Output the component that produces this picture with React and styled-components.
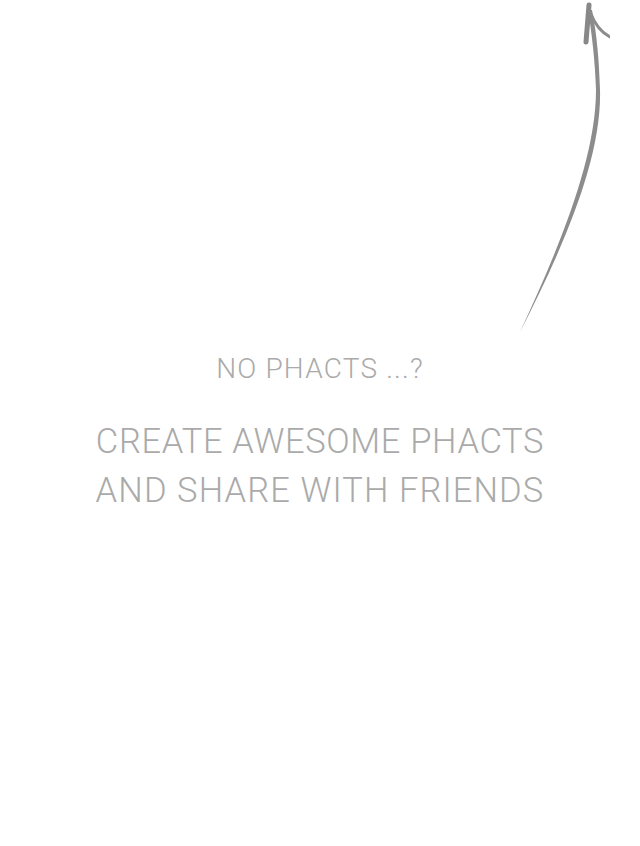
import React from 'react';
import styled, { createGlobalStyle } from 'styled-components';

const GlobalStyle = createGlobalStyle`
  html, body {
    margin: 0;
    padding: 0;
    background: #ffffff;
  }
  body {
    font-family: Roboto, "Liberation Sans", sans-serif;
  }
`;

const Page = styled.div`
  width: 640px;
  height: 846px;
  display: flex;
  flex-direction: column;
  background: #fff;
  overflow: hidden;
`;

const ArrowWrap = styled.div`
  align-self: flex-end;
  margin-right: 30px;
  width: 100px;
  height: 335px;

  svg {
    display: block;
  }
`;

const Message = styled.div`
  display: flex;
  flex-direction: column;
  align-items: center;
  color: #aaaaaa;
  font-weight: 300;
  text-transform: uppercase;
`;

const Title = styled.h2`
  margin: 18px 0 0;
  font-size: 28px;
  font-weight: 300;
  line-height: 32px;
  letter-spacing: 1.2px;
`;

const Lead = styled.p`
  margin: 32px 0 0;
  display: flex;
  flex-direction: column;
  align-items: center;
  font-size: 34.5px;
  font-weight: 300;
  line-height: 49px;
`;

const LeadLine = styled.span`
  letter-spacing: ${(p) => p.$spacing}px;
  white-space: nowrap;
`;

const Arrow = () => (
  <svg width="100" height="335" viewBox="0 0 100 335">
    <path
      d="M10 332 C52 250, 92 160, 90 90 C89 60, 87 35, 82 10 L78 10 C82 35, 85 60, 86 90 C86 160, 48 250, 10 332 Z"
      fill="#8c8c8c"
    />
    <path d="M79 5 L76 42" stroke="#888" strokeWidth="5" strokeLinecap="round" fill="none" />
    <path d="M81 14 Q87 30 100 37" stroke="#8c8c8c" strokeWidth="3" strokeLinecap="round" fill="none" />
  </svg>
);

export default function App() {
  return (
    <>
      <GlobalStyle />
      <Page>
        <ArrowWrap>
          <Arrow />
        </ArrowWrap>
        <Message>
          <Title>No phacts ...?</Title>
          <Lead>
            <LeadLine $spacing={0.65}>Create awesome phacts</LeadLine>
            <LeadLine $spacing={1.1}>and share with friends</LeadLine>
          </Lead>
        </Message>
      </Page>
    </>
  );
}
